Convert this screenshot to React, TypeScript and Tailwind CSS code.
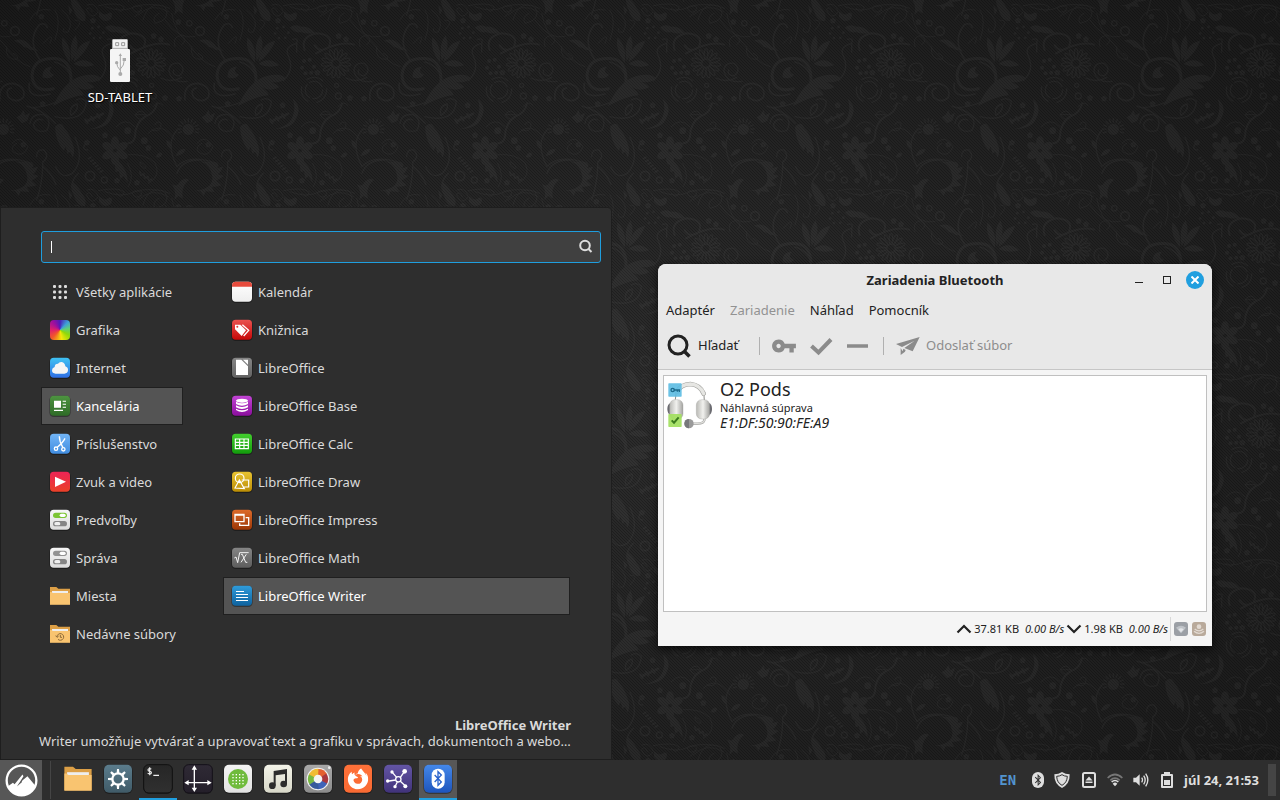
import type { ReactNode } from "react";
import { FaBluetoothB, FaFirefoxBrowser } from "react-icons/fa";
import { MdVpnKey } from "react-icons/md";

const range = (n: number) => Array.from({ length: n }, (_, i) => i);

/* ---------- wallpaper ---------- */

function Ornament() {
  return (
    <g id="ornament" fill="none" stroke="#fff" strokeWidth="4" strokeLinecap="round">
      <g fill="#fff" stroke="none">
        <path d="M44 188Q15 150 22 112Q52 140 44 188ZM50 184Q40 130 62 106Q78 145 50 184ZM56 186Q62 130 106 122Q92 160 56 186ZM56 192Q85 168 118 196Q85 206 56 192Z" />
        <path d="M-6 318Q30 240 80 228Q125 218 138 236Q118 250 92 246Q110 252 118 262Q90 276 66 262Q84 276 86 286Q50 288 -6 318Z" />
        <path d="M0 380Q18 360 28 384Q44 400 56 440Q60 462 52 472Q46 446 38 462L32 440L26 452Q2 424 0 380Z" />
        <path d="M158 296Q186 320 170 352Q158 390 92 388Q144 384 158 350Q168 322 158 296Z" />
        <path d="M176 470Q218 500 218 548L206 528L196 536L192 514L182 516Z" />
        <path d="M150 82Q166 70 184 80Q208 78 226 100Q196 102 184 96Q164 102 150 82Z" />
        <path d="M432 122Q462 110 484 140L506 152L482 150Q470 140 462 142Q452 128 432 122Z" />
        <path d="M440 352L452 344L460 330L466 346L480 338L472 362L456 370Z" />
        <path d="M52 545Q72 560 80 580Q96 596 90 618Q70 620 60 596Q48 570 52 545Z" />
        <path d="M350 552Q366 562 372 548Q388 530 402 540Q376 560 384 596L370 588L358 600Q366 572 350 552Z" />
        <path d="M436 484Q506 486 486 504L504 500Q496 520 488 522L506 528Q490 540 484 542L500 556Q476 562 470 560L478 576L452 574L446 588L436 574L420 572Q476 566 472 530Q468 496 436 484Z" />
        <path d="M132 34Q150 50 162 38Q176 36 168 56Q150 72 132 50ZM40 570L52 586L44 600Z" />
        <path d="M362 468Q372 442 392 448Q386 466 362 468ZM334 420Q352 424 350 448Q334 444 334 420ZM302 470Q314 450 322 462Q316 478 302 470Z" />
        <path d="M518 232Q516 200 546 200Q530 216 552 224Q540 240 518 232Z" />
        {range(6).map((i) => (
          <ellipse key={i} cx="180" cy="428" rx="12" ry="19" transform={`rotate(${i * 60} 180 452)`} />
        ))}
        <circle cx="400" cy="388" r="17" />
        <circle cx="218" cy="392" r="10" />
        <circle cx="268" cy="422" r="10" />
        {[[128, 316], [150, 406], [96, 428], [280, 444], [186, 542], [246, 548], [372, 296], [330, 294], [518, 312], [460, 434], [318, 118], [370, 66], [296, 108], [514, 50], [232, 218], [114, 62]].map(([x, y]) => (
          <g key={`${x}-${y}`}>
            {range(5).map((k) => (
              <circle key={k} cx={x} cy={y - 5} r="4" transform={`rotate(${k * 72} ${x} ${y})`} />
            ))}
          </g>
        ))}
        {range(6).map((k) => (
          <g key={k}>
            <ellipse cx={104 + k * 7} cy={474 + k * 8} rx="7" ry="3" transform={`rotate(-30 ${104 + k * 7} ${474 + k * 8})`} />
            <ellipse cx={94 + k * 9} cy={364 - k * 4} rx="4" ry="10" transform={`rotate(${k % 2 ? 60 : -30} ${94 + k * 9} ${364 - k * 4})`} />
            <ellipse cx={256 + k * 6} cy={520 + k * 4} rx="3" ry="8" transform={`rotate(${k % 2 ? 60 : -20} ${256 + k * 6} ${520 + k * 4})`} />
            <circle cx={204 + Math.cos(k) * 18} cy={200 + Math.sin(k) * 22} r="6" />
            <circle cx={125 + Math.cos(k) * 20} cy={98 + Math.sin(k) * 18} r="4" />
          </g>
        ))}
      </g>
      {range(15).map((i) => (
        <ellipse key={i} cx="288" cy="162" rx="5" ry="16" transform={`rotate(${i * 24} 288 190)`} />
      ))}
      {range(11).map((i) => (
        <path key={i} d="M400 366V356" transform={`rotate(${i * 22 - 110} 400 388)`} />
      ))}
      <circle cx="435" cy="93" r="13" strokeWidth="5" />
      <circle cx="403" cy="70" r="8" />
      <circle cx="290" cy="256" r="6" />
      <circle cx="295" cy="288" r="9" />
      <circle cx="105" cy="528" r="14" strokeWidth="5" />
      <circle cx="148" cy="540" r="9" />
      <circle cx="222" cy="270" r="26" strokeDasharray="44 10" />
      <circle cx="222" cy="270" r="38" strokeDasharray="50 28" />
      <path strokeWidth="9" d="M602 264Q610 180 560 176Q490 170 486 226Q490 280 550 266" />
      <path strokeWidth="5" d="M0 186Q48 200 50 250M510 180Q470 120 508 74Q526 66 532 82M390 300Q384 250 430 250Q470 260 460 292Q440 312 416 292Q404 268 424 264M478 250Q470 300 540 282" />
      <path strokeWidth="6" d="M194 150Q180 110 230 100Q284 104 266 142Q240 160 224 136M228 160Q300 120 342 134M306 310Q300 340 270 350Q240 370 240 410Q236 428 220 430" />
      <path d="M342 214Q342 186 372 190Q396 210 372 228Q350 226 356 210M380 232Q350 250 318 234M342 214Q350 250 396 244M366 390Q330 430 366 500Q400 460 486 490M366 520Q380 478 440 480M500 470Q500 446 522 450Q540 470 518 486Q520 540 500 600M520 500Q566 540 562 592M480 370Q484 340 520 344Q548 360 530 392Q496 400 490 374Q500 352 518 360" />
      <path d="M130 242Q164 210 146 170Q130 140 170 130Q176 112 158 118M170 130V156M0 350Q90 370 94 304Q80 290 64 300M48 346Q40 320 66 312Q72 330 48 346M556 370Q520 330 470 318Q500 330 560 306M60 412Q90 480 52 520Q20 540 2 500M70 520Q40 550 56 580M98 450Q80 450 90 432" />
      <path strokeWidth="3" d="M220 464Q270 460 300 488Q320 530 280 550M256 486Q280 500 270 506Q250 496 256 486M218 490Q240 530 220 560M96 570Q120 560 130 590Q110 620 94 584Q104 570 112 590M130 572Q190 560 208 576Q200 600 184 580M236 574Q300 560 344 580M232 580Q240 600 260 586M250 600Q290 560 340 590M426 430Q450 400 474 440Q460 476 430 456Q420 440 440 430M280 400Q320 360 360 420M184 380Q210 350 240 380M240 344Q260 320 274 348Q256 370 240 344H274M294 320Q310 300 324 316M290 390Q320 400 318 370Q306 360 300 374M264 60Q280 0 330 20Q350 60 300 70Q290 50 312 40M330 60Q370 120 420 110M350 40Q360 100 400 130Q440 190 480 200M360 140Q350 110 380 106Q400 120 380 134M410 140Q404 180 440 178Q450 170 430 160M150 20Q200 40 240 20Q280 10 240 50M20 30Q60 60 40 96Q20 100 26 86M60 90Q90 60 60 60M0 120Q20 60 0 30M540 30Q500 20 480 60M520 130Q556 90 540 130" />
    </g>
  );
}

function Wallpaper() {
  return (
    <div className="absolute inset-0 bg-[radial-gradient(ellipse_at_50%_52%,#2d2d2d_0%,#242424_45%,#191919_100%)]">
      <svg className="h-full w-full" aria-hidden="true">
        <defs>
          <pattern id="damask" x="55" y="0" width="185" height="185" patternUnits="userSpaceOnUse" viewBox="0 0 555 555">
            <Ornament />
            <use href="#ornament" x="-555" />
            <use href="#ornament" x="555" />
            <use href="#ornament" y="-555" />
            <use href="#ornament" x="555" y="-555" />
          </pattern>
          <pattern id="twill" width="3" height="3" patternUnits="userSpaceOnUse">
            <path d="M0 0L3 3M-1 2L1 4M2 -1L4 1" stroke="#000" strokeWidth="1" />
          </pattern>
        </defs>
        <rect width="100%" height="100%" fill="url(#twill)" opacity="0.25" />
        <rect width="100%" height="100%" fill="url(#damask)" opacity="0.035" />
      </svg>
    </div>
  );
}

/* ---------- icons ---------- */

type TileProps = { id: string; from: string; to: string; size?: "menu" | "panel"; children?: ReactNode };

function Tile({ id, from, to, size = "menu", children }: TileProps) {
  const n = size === "menu" ? 66 : 90;
  return (
    <svg viewBox={`0 0 ${n} ${n}`} className={size === "menu" ? "size-[22px] shrink-0" : "size-[30px] shrink-0"} aria-hidden="true">
      <defs>
        <linearGradient id={id} x1="0" y1="0" x2="0" y2="1">
          <stop offset="0" stopColor={from} />
          <stop offset="1" stopColor={to} />
        </linearGradient>
      </defs>
      <rect x="1" y="2" width={n - 2} height={n - 2} rx={n / 5} fill="#000" opacity="0.35" />
      <rect x="3" y="2" width={n - 6} height={n - 6} rx={n / 6} fill={`url(#${id})`} />
      {children}
    </svg>
  );
}

function Folder({ panel, recent }: { panel?: boolean; recent?: boolean }) {
  return (
    <svg viewBox="0 0 66 66" className={panel ? "size-[30px] shrink-0" : "size-[22px] shrink-0"} aria-hidden="true">
      <path d="M3 6H22L28 11H63V58H3Z" fill="#dc9f46" />
      <path d="M9 18H57V30H9Z" fill="#eee" />
      <path d="M3 21H8Q9 24 13 24H63V59H3Z" fill="#f9c470" />
      {recent && (
        <g fill="none" stroke="#8d6a38" strokeWidth="3">
          <path d="M24 41A10 10 0 1 1 27 49M20 38L24 43L29 39M34 36V43H39" />
        </g>
      )}
    </svg>
  );
}

const Switches = ({ id, color }: { id: string; color: string }) => (
  <Tile id={id} from="#f6f6f6" to="#dcdcdc">
    <rect x="12" y="11" width="42" height="16" rx="8" fill={color} />
    <rect x="32" y="14" width="18" height="10" rx="5" fill="#fff" />
    <rect x="12" y="36" width="42" height="16" rx="8" fill="#858585" />
    <rect x="16" y="39" width="18" height="10" rx="5" fill="#eee" />
  </Tile>
);

const categories: { label: string; icon: ReactNode; active?: boolean }[] = [
  {
    label: "Všetky aplikácie",
    icon: (
      <svg viewBox="0 0 22 22" className="size-[22px] shrink-0" fill="#ddd" aria-hidden="true">
        {range(9).map((i) => (
          <rect key={i} x={4 + (i % 3) * 5.5} y={4 + Math.floor(i / 3) * 5.5} width="3" height="3" rx="1" />
        ))}
      </svg>
    ),
  },
  {
    label: "Grafika",
    icon: (
      <span className="flex size-[22px] shrink-0 p-px">
        <span className="flex-1 rounded bg-[conic-gradient(#4b1db8,#3f9fd8_45deg,#5fcf7a_80deg,#8fd80a_120deg,#f5e80a_170deg,#f2572a_225deg,#e0206a_270deg,#9a0fa0_320deg,#4b1db8)]" />
      </span>
    ),
  },
  {
    label: "Internet",
    icon: (
      <Tile id="m-net" from="#3fc3f3" to="#2f6fe4">
        <path d="M20 50Q9 50 9 40Q9 32 17 30Q17 20 27 20Q31 14 38 15Q48 17 49 28Q58 31 57 40Q56 50 46 50Z" fill="#f5f5f5" />
      </Tile>
    ),
  },
  {
    label: "Kancelária",
    active: true,
    icon: (
      <Tile id="m-office" from="#4d9440" to="#2f6c27">
        <path d="M15 17H36V38H15ZM41 17H51V20H41ZM41 26H51V29H41ZM41 35H51V38H41ZM15 44H42V48H15Z" fill="#fff" />
      </Tile>
    ),
  },
  {
    label: "Príslušenstvo",
    icon: (
      <Tile id="m-acc" from="#72b5f7" to="#418de0">
        <g fill="none" stroke="#fff" strokeWidth="4">
          <path d="M31 10Q31 27 42 44M48 16Q42 28 25 43" />
          <circle cx="21" cy="47" r="5" />
          <circle cx="43" cy="49" r="5" />
        </g>
      </Tile>
    ),
  },
  {
    label: "Zvuk a video",
    icon: (
      <Tile id="m-av" from="#ee2456" to="#ea4028">
        <path d="M18 17L51 32L18 48Z" fill="#fff" />
      </Tile>
    ),
  },
  { label: "Predvoľby", icon: <Switches id="m-pref" color="#7cc534" /> },
  { label: "Správa", icon: <Switches id="m-adm" color="#929292" /> },
  { label: "Miesta", icon: <Folder /> },
  { label: "Nedávne súbory", icon: <Folder recent /> },
];

const apps: { label: string; icon: ReactNode; active?: boolean }[] = [
  {
    label: "Kalendár",
    icon: (
      <Tile id="a-cal" from="#ffffff" to="#eeeeee">
        <path d="M3 17V13Q3 2 14 2H52Q63 2 63 13V17Z" fill="#e74b3c" />
      </Tile>
    ),
  },
  {
    label: "Knižnica",
    icon: (
      <Tile id="a-lib" from="#ea5350" to="#c60808">
        <path d="M12 17H28L45 34L32 51L12 31Z" fill="#fff" />
        <path d="M34 17L53 34L38 51" fill="none" stroke="#fff" strokeWidth="4" />
        <circle cx="19" cy="23" r="3" fill="#dd3a38" />
      </Tile>
    ),
  },
  {
    label: "LibreOffice",
    icon: (
      <Tile id="a-lo" from="#858585" to="#636363">
        <path d="M15 8H31L51 28V54H15Z" fill="#fff" />
        <path d="M36 8H51V23Z" fill="#fff" />
      </Tile>
    ),
  },
  {
    label: "LibreOffice Base",
    icon: (
      <Tile id="a-base" from="#c245d5" to="#8b0e9d">
        <g fill="#fff">
          <ellipse cx="33" cy="17" rx="18" ry="6" />
          <path d="M15 20Q33 30 51 20V27Q33 37 15 27ZM15 31Q33 41 51 31V37Q33 47 15 37ZM15 41Q33 51 51 41V45Q33 57 15 45Z" />
        </g>
      </Tile>
    ),
  },
  {
    label: "LibreOffice Calc",
    icon: (
      <Tile id="a-calc" from="#43cf2e" to="#139c0c">
        <path d="M13 18H52V47H13ZM13 28H52M13 37H52M26 18V47M39 18V47" fill="none" stroke="#fff" strokeWidth="3.5" />
      </Tile>
    ),
  },
  {
    label: "LibreOffice Draw",
    icon: (
      <Tile id="a-draw" from="#e9c431" to="#bb8d05">
        <g fill="none" stroke="#fff" strokeWidth="3.5">
          <circle cx="26" cy="22" r="13" />
          <path d="M32 27H53V48H38M25 27L12 51L40 53Z" />
        </g>
      </Tile>
    ),
  },
  {
    label: "LibreOffice Impress",
    icon: (
      <Tile id="a-imp" from="#dd6b2a" to="#9c3707">
        <path d="M12 16H39V38H12ZM44 26H53V49H26V43M12 18H39" fill="none" stroke="#fff" strokeWidth="4" />
      </Tile>
    ),
  },
  {
    label: "LibreOffice Math",
    icon: (
      <Tile id="a-math" from="#858585" to="#5d5d5d">
        <path d="M10 33L15 30L20 47L26 17H53M30 22H34L44 46H49M46 22L30 46" fill="none" stroke="#f3f3f3" strokeWidth="3" />
      </Tile>
    ),
  },
  {
    label: "LibreOffice Writer",
    active: true,
    icon: (
      <Tile id="a-wri" from="#2f9cdb" to="#0f629e">
        <path d="M15 19.500H39M15 28.500H51M15 37.500H51M15 46.500H51" stroke="#fff" strokeWidth="3" />
      </Tile>
    ),
  },
];

const Gear = () => (
  <g>
    <circle cx="45" cy="45" r="17" fill="none" stroke="#fff" strokeWidth="7" />
    {range(8).map((i) => (
      <path key={i} d="M41 27L42 15H48L49 27Z" fill="#fff" transform={`rotate(${i * 45} 45 45)`} />
    ))}
  </g>
);

const launchers: { label: string; icon: ReactNode; running?: boolean; active?: boolean }[] = [
  { label: "Súbory", icon: <Folder panel /> },
  {
    label: "Nastavenia",
    icon: (
      <Tile size="panel" id="p-set" from="#5b7c8c" to="#405b68">
        <Gear />
      </Tile>
    ),
  },
  {
    label: "Terminál",
    running: true,
    icon: (
      <Tile size="panel" id="p-term" from="#262626" to="#303030">
        <rect x="2" y="2" width="86" height="85" rx="15" fill="none" stroke="#111" strokeWidth="3" />
        <path d="M25 15Q15 12 15 18Q15 21 20 22Q26 23 25 27Q23 32 14 28M20 10V34M31 34H48" fill="none" stroke="#eee" strokeWidth="3.500" />
      </Tile>
    ),
  },
  {
    label: "Okná",
    icon: (
      <Tile size="panel" id="p-win" from="#2f2a35" to="#241f2a">
        <rect x="2" y="2" width="86" height="85" rx="15" fill="none" stroke="#15111a" strokeWidth="3" />
        <path d="M34 12V76M10 56H80" stroke="#fff" strokeWidth="4" />
        <path d="M34 4L42 17H26ZM34 84L42 71H26ZM4 56L17 48V64ZM86 56L73 48V64Z" fill="#fff" />
      </Tile>
    ),
  },
  {
    label: "Správca softvéru",
    icon: (
      <Tile size="panel" id="p-soft" from="#f4f4f4" to="#e2e2e2">
        <circle cx="45" cy="45" r="30" fill="#6fbb3c" />
        {range(16).map((i) => (
          <rect key={i} x={28 + (i % 4) * 10} y={30 + Math.floor(i / 4) * 9} width="4" height="4" fill="#fff" />
        ))}
      </Tile>
    ),
  },
  {
    label: "Hudba",
    icon: (
      <Tile size="panel" id="p-mus" from="#f3f3e8" to="#d8d8c9">
        <g fill="#2c2c2c">
          <circle cx="28" cy="65" r="10" />
          <circle cx="62" cy="60" r="10" />
          <path d="M32 21L72 15V60H66V30L38 34V65H32Z" />
        </g>
      </Tile>
    ),
  },
  {
    label: "Fotografie",
    icon: (
      <Tile size="panel" id="p-pho" from="#a8a8a8" to="#8c8c8c">
        <circle cx="45" cy="45" r="34" fill="#f1f1f1" />
        {["#e4602f", "#a8383e", "#3f63b8", "#375a9c", "#78b842", "#f0bc35"].map((c, i) => (
          <path key={c} d="M45 45L43 15A30 30 0 0 1 72 31Z" fill={c} transform={`rotate(${i * 60} 45 45)`} />
        ))}
        <circle cx="45" cy="45" r="13" fill="#f4f4f4" />
        <circle cx="79" cy="11" r="4" fill="#eee" />
      </Tile>
    ),
  },
  {
    label: "Firefox",
    icon: (
      <Tile size="panel" id="p-ff" from="#ff7139" to="#f96a33">
        <FaFirefoxBrowser x="13" y="13" size={64} color="#fff" />
      </Tile>
    ),
  },
  {
    label: "Sieť",
    icon: (
      <Tile size="panel" id="p-net" from="#6355a5" to="#41337a">
        <g fill="none" stroke="#fff" strokeWidth="4">
          <circle cx="46" cy="46" r="8" />
          <path d="M41 40L28 25M52 40L62 26M38 48L18 51M43 54L37 66M52 52L65 64" />
        </g>
        <g fill="#fff">
          <circle cx="27" cy="24" r="5" />
          <circle cx="65" cy="22" r="7" />
          <circle cx="14" cy="51" r="5" />
          <circle cx="36" cy="68" r="5" />
          <circle cx="67" cy="67" r="6" />
        </g>
      </Tile>
    ),
  },
  {
    label: "Zariadenia Bluetooth",
    running: true,
    active: true,
    icon: (
      <Tile size="panel" id="p-bt" from="#4488ea" to="#1e55bd">
        <rect x="26" y="14" width="39" height="60" rx="19" fill="#fff" />
        <path d="M35 33L55 54L45 64V23L55 33L35 54" fill="none" stroke="#2a63cc" strokeWidth="4" />
      </Tile>
    ),
  },
];

/* ---------- start menu ---------- */

function MenuRow({ label, icon, active }: { label: string; icon: ReactNode; active?: boolean }) {
  return (
    <button
      type="button"
      className={
        active
          ? "flex h-[38px] items-center gap-[5px] border border-[#1f1f1f] bg-[#545454] pl-[7px] text-left text-white"
          : "flex h-[38px] items-center gap-[5px] border border-transparent pl-[7px] text-left text-[#dadada]"
      }
    >
      {icon}
      <span className="whitespace-nowrap pt-0.5">{label}</span>
    </button>
  );
}

function StartMenu() {
  return (
    <section aria-label="Ponuka" className="absolute bottom-0 left-0 flex h-[553px] w-[612px] flex-col rounded-tr-sm border border-[#1e1e1e] bg-[#2e2e2e] pl-10 pr-[10px] pt-[23px] text-[13px] text-[#dadada]">
      <label className="flex h-8 w-[560px] items-center rounded-[3px] border border-[#1f9ede] bg-[#404040] px-[9px]">
        <span className="h-3 w-px bg-white" />
        <input type="text" aria-label="Hľadať v ponuke" className="min-w-0 flex-1 bg-transparent outline-none" />
        <svg viewBox="0 0 16 16" className="-mr-[3px] size-4 shrink-0" fill="none" stroke="#ddd" strokeWidth="2" aria-hidden="true">
          <circle cx="7" cy="6.500" r="4.800" />
          <path d="M10.500 10L13.500 13" />
        </svg>
      </label>
      <div className="mt-[10px] flex gap-10">
        <nav aria-label="Kategórie" className="flex w-[142px] flex-col">
          {categories.map((c) => (
            <MenuRow key={c.label} {...c} />
          ))}
        </nav>
        <nav aria-label="Aplikácie" className="flex w-[347px] flex-col">
          {apps.map((a) => (
            <MenuRow key={a.label} {...a} />
          ))}
        </nav>
      </div>
      <div className="-ml-0.5 mt-auto w-[532px] pb-[10px] leading-4">
        <p className="text-right font-bold">LibreOffice Writer</p>
        <p className="whitespace-nowrap">Writer umožňuje vytvárať a upravovať text a grafiku v správach, dokumentoch a webo…</p>
      </div>
    </section>
  );
}

/* ---------- bluetooth window ---------- */

function Headset() {
  return (
    <svg viewBox="0 0 138 144" className="h-12 w-[46px] shrink-0" aria-hidden="true">
      <defs>
        <linearGradient id="shell" x1="0" y1="0" x2="1" y2="0">
          <stop offset="0" stopColor="#b9b9b5" />
          <stop offset="0.500" stopColor="#f1f1ee" />
          <stop offset="1" stopColor="#a3a3a0" />
        </linearGradient>
      </defs>
      <path d="M25 56Q24 10 70 9Q112 12 111 44L112 60" fill="none" stroke="#8b8b88" strokeWidth="3" />
      <path d="M30 32Q42 10 70 9Q100 12 110 38" fill="none" stroke="#a2a29e" strokeWidth="14" strokeLinecap="round" />
      <path d="M30 32Q42 10 70 9Q100 12 110 38" fill="none" stroke="#e6e6e3" strokeWidth="10" strokeLinecap="round" />
      <path d="M112 108V118Q110 128 92 128H70" fill="none" stroke="#a0a09d" strokeWidth="7" />
      <path d="M112 108V118Q110 127 92 127H70" fill="none" stroke="#dfdfdc" strokeWidth="4" />
      <circle cx="66" cy="128" r="14" fill="#9a9a9a" />
      <path d="M66 114A14 14 0 0 0 66 142Z" fill="#77787c" />
      <ellipse cx="10" cy="84" rx="9" ry="17" fill="#6a6a70" />
      <ellipse cx="127" cy="84" rx="8" ry="17" fill="#6a6a70" />
      <rect x="8" y="56" width="40" height="58" rx="16" fill="url(#shell)" stroke="#9a9a97" />
      <rect x="88" y="56" width="40" height="58" rx="16" fill="url(#shell)" stroke="#9a9a97" />
      <rect x="4" y="7" width="40" height="40" rx="2" fill="#5bbbe2" opacity="0.900" />
      <path d="M20 27H37V33M31 27V32" fill="none" stroke="#1c6b8d" strokeWidth="4" />
      <circle cx="17" cy="27" r="5" fill="none" stroke="#1c6b8d" strokeWidth="4" />
      <rect x="4" y="99" width="40" height="39" rx="2" fill="#a2e05e" opacity="0.920" />
      <path d="M14 118L21 125L35 109" fill="none" stroke="#3c7b1f" strokeWidth="6" />
    </svg>
  );
}

function Rate({ up, total, speed }: { up?: boolean; total: string; speed: string }) {
  return (
    <span className="flex items-center">
      <svg viewBox="0 0 16 12" className="mr-[2px] h-3 w-4" fill="none" stroke="#222" strokeWidth="2.200" aria-hidden="true">
        <path d={up ? "M1.500 9.500L8 3L14.500 9.500" : "M1.500 2.500L8 9L14.500 2.500"} />
      </svg>
      <span className="mr-[6px]">{total}</span>
      <span className="mr-[2px] italic">{speed}</span>
    </span>
  );
}

function BluetoothWindow() {
  return (
    <section aria-label="Zariadenia Bluetooth" className="absolute left-[658px] top-[264px] flex h-[382px] w-[554px] flex-col overflow-hidden rounded-t-lg bg-[#f5f5f5] text-[13px] text-[#222] shadow-[0_3px_10px_rgba(0,0,0,0.7)]">
      <header className="border-b border-[#c6c6c6] bg-[#e8e8e8]">
        <div className="grid h-8 grid-cols-[1fr_auto_1fr] items-center">
          <span />
          <h1 className="pt-0.5 font-bold">Zariadenia Bluetooth</h1>
          <div className="flex items-center justify-end gap-[10px] pr-2">
            <button type="button" aria-label="Minimalizovať" className="grid size-[18px] place-items-center pt-1">
              <span className="h-px w-2 bg-[#222]" />
            </button>
            <button type="button" aria-label="Maximalizovať" className="grid size-[18px] place-items-center">
              <span className="size-2 border border-[#222]" />
            </button>
            <button type="button" aria-label="Zavrieť" className="grid size-[18px] place-items-center rounded-full bg-[#209fdf]">
              <svg viewBox="0 0 8 8" className="size-2" stroke="#fff" strokeWidth="2" aria-hidden="true">
                <path d="M0.500 0.500L7.500 7.500M7.500 0.500L0.500 7.500" />
              </svg>
            </button>
          </div>
        </div>
        <div className="flex h-7 items-center gap-[15px] px-2 pt-0.5">
          <button type="button">Adaptér</button>
          <button type="button" disabled className="text-[#929292]">Zariadenie</button>
          <button type="button">Náhľad</button>
          <button type="button">Pomocník</button>
        </div>
        <div className="flex h-[45px] items-center pb-px pl-[9px] text-[#8d8d8d]">
          <button type="button" className="flex w-[92px] items-center gap-[7px] text-[#222]">
            <svg viewBox="0 0 24 24" className="size-6" fill="none" stroke="#222" strokeWidth="3" aria-hidden="true">
              <circle cx="11" cy="11" r="9" />
              <path d="M17 17L22.500 22.500" strokeWidth="3.500" />
            </svg>
            Hľadať
          </button>
          <span className="h-[18px] w-px bg-[#b0b0b0]" />
          <button type="button" disabled aria-label="Párovať" className="ml-[11px]">
            <MdVpnKey className="size-[26px] text-[#8b8b8b]" />
          </button>
          <button type="button" disabled aria-label="Dôverovať" className="ml-3">
            <svg viewBox="0 0 24 24" className="size-6" fill="none" stroke="#8b8b8b" strokeWidth="4" aria-hidden="true">
              <path d="M2.500 12L9.500 18.500L22 5.500" />
            </svg>
          </button>
          <button type="button" disabled aria-label="Odstrániť" className="ml-3">
            <svg viewBox="0 0 24 24" className="size-6" stroke="#8b8b8b" strokeWidth="3.500" aria-hidden="true">
              <path d="M2 12H23" />
            </svg>
          </button>
          <span className="ml-[14px] h-[18px] w-px bg-[#b0b0b0]" />
          <button type="button" disabled className="ml-3 flex items-center gap-[6px]">
            <svg viewBox="0 0 72 60" className="h-5 w-6" fill="#8b8b8b" aria-hidden="true">
              <path d="M71 3L0 24L18 33L56 14L25 36L50 46ZM14 36L14 57L27 47L29 42L22 38L20 46Z" />
            </svg>
            Odoslať súbor
          </button>
        </div>
      </header>
      <div className="mx-[5px] mt-[5px] flex-1 border border-[#c0c0c0] bg-white pl-[3px] pt-[5px]">
        <div className="flex gap-[7px]">
          <Headset />
          <div className="-mt-0.5 flex flex-col">
            <span className="text-[18px] leading-[20px]">O2 Pods</span>
            <span className="pt-px text-[11px] leading-[15px]">Náhlavná súprava</span>
            <span className="text-[14px] leading-[16px] italic">E1:DF:50:90:FE:A9</span>
          </div>
        </div>
      </div>
      <footer className="flex h-[34px] items-center justify-end pr-[6px] text-[11px]">
        <Rate up total="37.81 KB" speed="0.00 B/s" />
        <Rate total="1.98 KB" speed="0.00 B/s" />
        <span className="mr-[3px] h-6 w-px bg-[#d8d8d8]" />
        <svg viewBox="0 0 42 42" className="mr-1 size-[14px]" aria-hidden="true">
          <rect width="42" height="42" rx="9" fill="#9b9fa5" />
          <path d="M6 17Q21 6 36 17L21 34Z" fill="#bfc3c8" />
          <path d="M13 22Q21 16 29 22L21 31Z" fill="#e3e5e8" />
        </svg>
        <svg viewBox="0 0 42 42" className="size-[14px]" aria-hidden="true">
          <rect width="42" height="42" rx="9" fill="#b9aa9b" />
          <circle cx="21" cy="14" r="7" fill="#e2dad2" />
          <path d="M8 21Q21 32 34 21M6 28Q21 40 36 28" fill="none" stroke="#e2dad2" strokeWidth="4" />
        </svg>
      </footer>
    </section>
  );
}

/* ---------- panel ---------- */

function Tray() {
  return (
    <div className="ml-auto flex items-center pr-1 text-[#dedede]">
      <button type="button" className="mr-4 font-['DejaVu_Sans_Mono',monospace] text-[14px] font-bold text-[#5294cf]">EN</button>
      <span className="mr-[10px] grid h-4 w-[12px] place-items-center rounded-full bg-[#dedede]">
        <FaBluetoothB className="size-3 text-[#2e2e2e]" />
      </span>
      <svg viewBox="0 0 48 48" className="mr-3 size-4" aria-hidden="true">
        <path d="M24 0Q34 7 47 7Q48 36 24 48Q0 36 1 7Q14 7 24 0Z" fill="#dedede" />
        <path d="M24 8Q31 13 40 13Q39 32 24 40Q9 32 8 13Q17 13 24 8Z" fill="none" stroke="#2e2e2e" strokeWidth="3" />
      </svg>
      <svg viewBox="0 0 14 16" className="mr-[11px] h-4 w-[14px]" aria-hidden="true">
        <rect x="1" y="1" width="12" height="14" rx="1.500" fill="none" stroke="#dedede" strokeWidth="2" />
        <path d="M7 4.500L10.500 8.500H3.500ZM3.500 9.500H10.500V11H3.500Z" fill="#dedede" />
      </svg>
      <svg viewBox="0 0 48 42" className="mr-[10px] h-[14px] w-4" fill="none" strokeWidth="5" aria-hidden="true">
        <path d="M2 15Q24 -6 46 15" stroke="#777" />
        <path d="M10 22Q24 9 38 22" stroke="#777" />
        <path d="M14 27Q24 18 34 27" stroke="#dedede" />
        <path d="M17 32Q24 25 31 32L24 40Z" fill="#dedede" />
      </svg>
      <svg viewBox="0 0 48 42" className="mr-3 h-[14px] w-4" aria-hidden="true">
        <path d="M1 14H9L20 4V38L9 28H1Z" fill="#dedede" />
        <path d="M26 14Q31 21 26 28M32 8Q41 21 32 34M38 2Q51 21 38 40" fill="none" stroke="#dedede" strokeWidth="4" />
      </svg>
      <svg viewBox="0 0 12 16" className="mr-[11px] h-4 w-3" aria-hidden="true">
        <path d="M3 0H9V2H11Q12 2 12 3V15Q12 16 11 16H1Q0 16 0 15V3Q0 2 1 2H3ZM2 4V14H10V4Z" fill="#dedede" fillRule="evenodd" />
        <path d="M3 8H9V13H3Z" fill="#dedede" />
      </svg>
      <time className="mr-[9px] whitespace-nowrap pt-0.5 text-[13px] font-bold">júl 24, 21:53</time>
      <button type="button" aria-label="Zobraziť plochu" className="h-8 w-2 bg-[#454545]" />
    </div>
  );
}

function Panel() {
  return (
    <footer className="flex h-10 items-stretch bg-[#2e2e2e]">
      <button type="button" aria-label="Ponuka" className="grid w-[42px] place-items-center bg-[#575757]">
        <svg viewBox="0 0 100 100" className="size-[33px]" aria-hidden="true">
          <circle cx="50" cy="50" r="45" fill="none" stroke="#fff" strokeWidth="7" />
          <path d="M8 68L24 57L29 61L53 32L56 37L48 54L68 37L92 66Q82 95 50 95Q18 95 8 68Z" fill="#fff" />
          <path d="M57 36L36 68L50 56Z" fill="#575757" />
        </svg>
      </button>
      <span className="mx-2 h-[38px] w-px self-center bg-[#454545]" />
      <div className="flex gap-0.5">
        {launchers.map((l) => (
          <button
            key={l.label}
            type="button"
            aria-label={l.label}
            className={
              l.active
                ? "grid w-[38px] place-items-center border-b-2 border-[#209fdf] bg-[#575757]"
                : l.running
                  ? "grid w-[38px] place-items-center border-b-2 border-[#209fdf]"
                  : "grid w-[38px] place-items-center border-b-2 border-transparent"
            }
          >
            {l.icon}
          </button>
        ))}
      </div>
      <Tray />
    </footer>
  );
}

export default function App() {
  return (
    <div className="flex min-h-screen flex-col bg-[#1a1a1a] font-['Noto_Sans',sans-serif]">
      <main className="relative flex-1 overflow-hidden">
        <Wallpaper />
        <button type="button" className="absolute left-[70px] top-[39px] flex w-[100px] flex-col items-center gap-[6px] text-[13px] text-white">
          <svg viewBox="0 0 60 129" className="h-[43px] w-5" aria-hidden="true">
            <rect x="7" y="1" width="46" height="30" rx="2" fill="#f3f3f3" />
            <path d="M17 11H26V20H17ZM35 11H44V20H35Z" fill="none" stroke="#999" strokeWidth="3" />
            <path d="M7 28H53" stroke="#aaa" strokeWidth="3" />
            <rect x="0" y="30" width="60" height="99" rx="4" fill="#f5f5f5" />
            <path d="M31 48V104M31 90Q43 80 43 62M31 94Q20 84 20 70" fill="none" stroke="#aaa" strokeWidth="3" />
            <path d="M31 43L36 51H26ZM38 57H48V66H38Z" fill="#aaa" />
            <circle cx="20" cy="71" r="5" fill="#aaa" />
            <circle cx="31" cy="105" r="6" fill="#aaa" />
          </svg>
          <span className="[text-shadow:1px_1px_1px_#000]">SD-TABLET</span>
        </button>
        <StartMenu />
        <BluetoothWindow />
      </main>
      <Panel />
    </div>
  );
}
